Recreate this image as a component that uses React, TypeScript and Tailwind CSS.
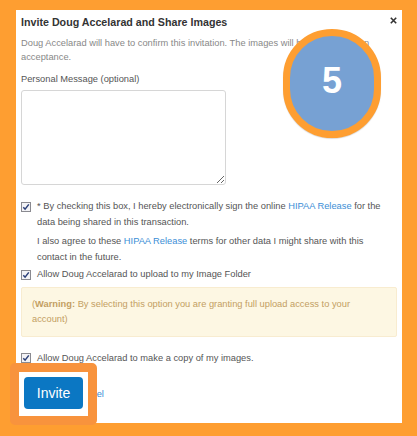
import React from "react";

const Check = () => (
  <svg width="10" height="10" viewBox="0 0 10 10" className="shrink-0">
    <rect x="0.5" y="0.5" width="9" height="9" fill="#f3f3f6" stroke="#8a8a90" />
    <path d="M2.3 5.2 L4.1 7.2 L7.8 2.4" fill="none" stroke="#2b3f78" strokeWidth="1.5" />
  </svg>
);

const App = () => {
  return (
    <div className="relative w-[417px] h-[436px] bg-[#fe9e31] pt-[10px] pl-[16px] pr-[15px] pb-[13px] font-['Liberation_Sans',Arial,sans-serif]">
      <div className="relative h-full bg-white px-[5px] pt-[5px]">
        <h3 className="text-[10.7px] leading-[14px] font-bold text-[#333]">Invite Doug Accelarad and Share Images</h3>
        <button className="absolute right-[5px] top-[7px] w-[7px] h-[7px]">
          <svg width="7" height="7" viewBox="0 0 7 7">
            <path d="M0.8 0.8 L6.2 6.2 M6.2 0.8 L0.8 6.2" stroke="#333" strokeWidth="1.6" />
          </svg>
        </button>

        <p className="mt-[7px] text-[9.3px] leading-[14px] text-[#888] whitespace-nowrap">
          Doug Accelarad will have to confirm this invitation. The images will be available upon
          <br />
          acceptance.
        </p>

        <label className="block mt-[8px] text-[9.3px] leading-[14px] text-[#555]">Personal Message (optional)</label>
        <textarea className="block mt-[4px] w-[205px] h-[95px] border border-[#d6d6d6] rounded-[3px] bg-white outline-none" />

        <div className="mt-[14px] flex gap-[6px] text-[9.3px] leading-[15.5px] text-[#555]">
          <div className="pt-[3px]"><Check /></div>
          <div>
            <p className="whitespace-nowrap">
              * By checking this box, I hereby electronically sign the online{" "}
              <a className="text-[#3b8ed6]">HIPAA Release</a> for the
              <br />
              data being shared in this transaction.
            </p>
            <p className="mt-[4px] whitespace-nowrap">
              I also agree to these <a className="text-[#3b8ed6]">HIPAA Release</a> terms for other data I might share with this
              <br />
              contact in the future.
            </p>
          </div>
        </div>

        <div className="mt-[2px] flex items-center gap-[6px] text-[9.3px] leading-[15.5px] text-[#555]">
          <Check />
          <span>Allow Doug Accelarad to upload to my Image Folder</span>
        </div>

        <div className="mt-[4px] h-[50px] border border-[#f8ecd0] bg-[#fdf7e3] rounded-[2px] px-[10px] pt-[9px] text-[9.3px] leading-[15px] text-[#c39e62]">
          (<b>Warning:</b> By selecting this option you are granting full upload access to your
          <br />
          account)
        </div>

        <div className="mt-[14px] flex items-center gap-[6px] text-[9.3px] leading-[15.5px] text-[#555]">
          <Check />
          <span>Allow Doug Accelarad to make a copy of my images.</span>
        </div>

        <div className="mt-[17px] flex items-center h-[24px] text-[9.3px]">
          <div className="w-[46px] h-[24px] rounded-[3px] bg-[#0b77c3]" />
          <a className="ml-[8px] text-[#3b8ed6]">Cancel</a>
        </div>
      </div>

      {/* annotation: step number */}
      <div className="absolute left-[283px] top-[29px] w-[98px] h-[109px] rounded-full border-[7px] border-[#fe9e31] bg-[#77a1d3] shadow-[0_1px_1px_rgba(0,0,0,0.15)] flex items-center justify-center">
        <span className="text-[36px] leading-none font-bold text-white -mt-[5px]">5</span>
      </div>

      {/* annotation: highlighted button */}
      <div className="absolute left-[10px] top-[363px] w-[87px] h-[62px] border-[9px] border-[#f8933d] rounded-[5px] bg-white pl-[5px] pt-[5px]">
        <button className="w-[59px] h-[32px] rounded-[4px] bg-[#0b77c3] text-white text-[14px] leading-none">Invite</button>
      </div>
    </div>
  );
};

export default App;
